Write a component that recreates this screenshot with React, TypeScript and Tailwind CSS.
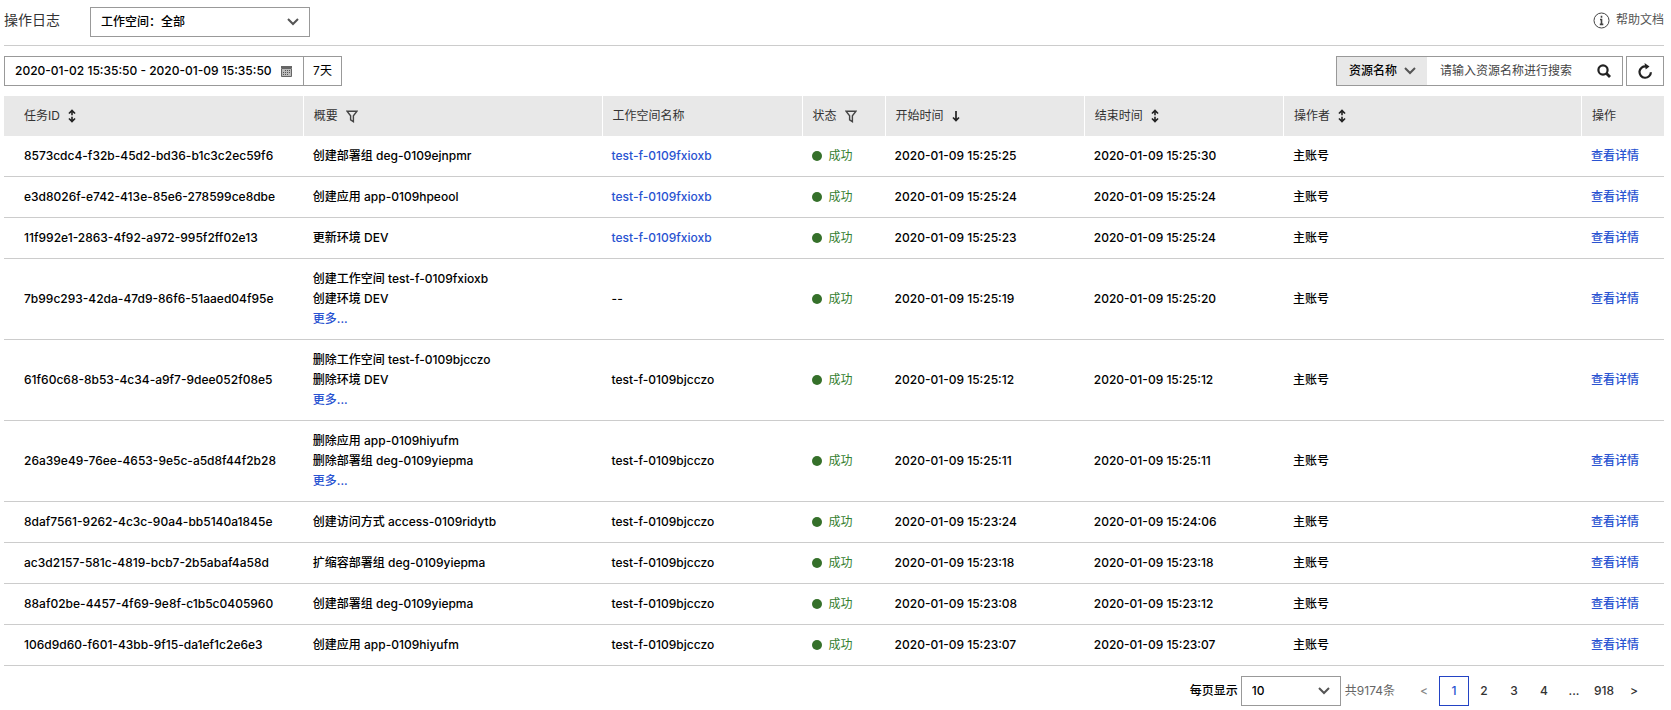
import { ReactNode, SVGProps } from "react";

type Workspace = { name: string; linked?: boolean };

type LogRow = {
  id: string;
  summary: string[];
  more?: boolean;
  workspace: Workspace;
  start: string;
  end: string;
};

const created: Workspace = { name: "test-f-0109fxioxb", linked: true };
const removed: Workspace = { name: "test-f-0109bjcczo" };

const rows: LogRow[] = [
  {
    id: "8573cdc4-f32b-45d2-bd36-b1c3c2ec59f6",
    summary: ["创建部署组 deg-0109ejnpmr"],
    workspace: created,
    start: "2020-01-09 15:25:25",
    end: "2020-01-09 15:25:30",
  },
  {
    id: "e3d8026f-e742-413e-85e6-278599ce8dbe",
    summary: ["创建应用 app-0109hpeool"],
    workspace: created,
    start: "2020-01-09 15:25:24",
    end: "2020-01-09 15:25:24",
  },
  {
    id: "11f992e1-2863-4f92-a972-995f2ff02e13",
    summary: ["更新环境 DEV"],
    workspace: created,
    start: "2020-01-09 15:25:23",
    end: "2020-01-09 15:25:24",
  },
  {
    id: "7b99c293-42da-47d9-86f6-51aaed04f95e",
    summary: ["创建工作空间 test-f-0109fxioxb", "创建环境 DEV"],
    more: true,
    workspace: { name: "--" },
    start: "2020-01-09 15:25:19",
    end: "2020-01-09 15:25:20",
  },
  {
    id: "61f60c68-8b53-4c34-a9f7-9dee052f08e5",
    summary: ["删除工作空间 test-f-0109bjcczo", "删除环境 DEV"],
    more: true,
    workspace: removed,
    start: "2020-01-09 15:25:12",
    end: "2020-01-09 15:25:12",
  },
  {
    id: "26a39e49-76ee-4653-9e5c-a5d8f44f2b28",
    summary: ["删除应用 app-0109hiyufm", "删除部署组 deg-0109yiepma"],
    more: true,
    workspace: removed,
    start: "2020-01-09 15:25:11",
    end: "2020-01-09 15:25:11",
  },
  {
    id: "8daf7561-9262-4c3c-90a4-bb5140a1845e",
    summary: ["创建访问方式 access-0109ridytb"],
    workspace: removed,
    start: "2020-01-09 15:23:24",
    end: "2020-01-09 15:24:06",
  },
  {
    id: "ac3d2157-581c-4819-bcb7-2b5abaf4a58d",
    summary: ["扩缩容部署组 deg-0109yiepma"],
    workspace: removed,
    start: "2020-01-09 15:23:18",
    end: "2020-01-09 15:23:18",
  },
  {
    id: "88af02be-4457-4f69-9e8f-c1b5c0405960",
    summary: ["创建部署组 deg-0109yiepma"],
    workspace: removed,
    start: "2020-01-09 15:23:08",
    end: "2020-01-09 15:23:12",
  },
  {
    id: "106d9d60-f601-43bb-9f15-da1ef1c2e6e3",
    summary: ["创建应用 app-0109hiyufm"],
    workspace: removed,
    start: "2020-01-09 15:23:07",
    end: "2020-01-09 15:23:07",
  },
];

// the operator column takes the space that is left
const columns = [
  { label: "任务ID", width: "w-[18%]", icon: "sort" },
  { label: "概要", width: "w-[18%]", icon: "filter" },
  { label: "工作空间名称", width: "w-[200px]" },
  { label: "状态", width: "w-[83px]", icon: "filter" },
  { label: "开始时间", width: "w-[12%]", icon: "desc" },
  { label: "结束时间", width: "w-[12%]", icon: "sort" },
  { label: "操作者", width: "w-auto", icon: "sort" },
  { label: "操作", width: "w-[83px]" },
];

const pages = ["1", "2", "3", "4", "...", "918"];

function Chevron(props: SVGProps<SVGSVGElement>) {
  return (
    <svg width="12" height="8" viewBox="0 0 12 8" fill="none" stroke="#555" strokeWidth="2" aria-hidden="true" {...props}>
      <path d="M1 1l5 5 5-5" />
    </svg>
  );
}

function SortIcon() {
  return (
    <svg width="8" height="14" viewBox="0 0 8 14" aria-hidden="true">
      <path d="M4 2v4.2M4 7.8V12" stroke="#222" strokeWidth="1.6" />
      <path d="M4 .3l3.6 3.6-.9 1L4 3 1.3 4.9l-.9-1zM4 13.7l3.6-3.6-.9-1L4 11 1.3 9.1l-.9 1z" fill="#222" />
    </svg>
  );
}

function DescIcon() {
  return (
    <svg width="8" height="12" viewBox="0 0 8 12" fill="none" stroke="#222" strokeWidth="1.7" aria-hidden="true">
      <path d="M4 1v9.5M1 7.5l3 3 3-3" />
    </svg>
  );
}

function FilterIcon() {
  return (
    <svg width="12" height="13" viewBox="0 0 12 13" fill="none" stroke="#444" strokeWidth="1.4" aria-hidden="true">
      <path d="M1 1.2h10L7.4 5.8v5.8L4.6 9.8v-4z" />
    </svg>
  );
}

function CalendarIcon() {
  return (
    <svg width="11" height="11" viewBox="0 0 11 11" aria-hidden="true">
      <path d="M0 0h11v2H0z" fill="#666" />
      <path d="M.5 2.5h10v8H.5z" fill="#bbb" stroke="#666" />
      <path d="M4 4h1v1H4zM6 4h1v1H6zM8 4h1v1H8zM2 6h1v1H2zM4 6h1v1H4zM6 6h1v1H6zM8 6h1v1H8zM2 8h1v1H2zM4 8h1v1H4zM6 8h1v1H6z" fill="#555" />
    </svg>
  );
}

function InfoIcon() {
  return (
    <svg width="17" height="17" viewBox="0 0 17 17" fill="none" stroke="#444" aria-hidden="true">
      <circle cx="8.5" cy="8.5" r="7.5" />
      <path d="M8.5 3.8v2M7 7.5h1.5v4.7M6.8 12.4h3.5" strokeWidth="1.6" />
    </svg>
  );
}

function SearchIcon() {
  return (
    <svg width="14" height="14" viewBox="0 0 14 14" fill="none" stroke="#222" strokeWidth="2.2" aria-hidden="true">
      <circle cx="6" cy="6" r="4.6" />
      <path d="M9 9l4 4" strokeWidth="2.8" />
    </svg>
  );
}

function RefreshIcon() {
  return (
    <svg width="16" height="16" viewBox="0 0 16 16" aria-hidden="true">
      <path d="M9 3.4a5.7 5.7 0 1 0 4.9 5.8" fill="none" stroke="#222" strokeWidth="2.2" />
      <path d="M7.5 0l5 3.4-3.8 3z" fill="#222" />
    </svg>
  );
}

const headIcons: Record<string, { label: string; node: ReactNode }> = {
  sort: { label: "排序", node: <SortIcon /> },
  desc: { label: "降序", node: <DescIcon /> },
  filter: { label: "筛选", node: <FilterIcon /> },
};

export default function App() {
  return (
    <div className="bg-white pt-1 pr-[7px] pb-1 pl-1 font-['Inter','Noto_Sans_CJK_SC',sans-serif] text-xs leading-5 font-medium text-black">
      <header className="flex h-[42px] items-center border-b border-[#ccc] pb-[5px]">
        <h1 className="w-[86px] pb-1 text-sm leading-5 font-normal text-[#333]">操作日志</h1>
        <div className="grid w-[220px] items-center">
          <select
            aria-label="工作空间"
            className="col-start-1 row-start-1 h-[30px] appearance-none border border-[#999] bg-white px-[10px]"
          >
            <option>工作空间：全部</option>
          </select>
          <Chevron className="pointer-events-none col-start-1 row-start-1 mr-[11px] justify-self-end" />
        </div>
        <a href="#" className="ml-auto flex items-center gap-[6px] pb-1 font-normal text-[#555]">
          <InfoIcon />
          帮助文档
        </a>
      </header>

      {/* Toolbar */}
      <div className="flex items-center justify-between py-[10px]">
        <div className="flex h-[30px] border border-[#999]">
          <label className="flex w-[299px] items-center border-r border-[#999] pr-[11px] pl-[10px]">
            <input
              type="text"
              aria-label="时间范围"
              defaultValue="2020-01-02 15:35:50 - 2020-01-09 15:35:50"
              className="min-w-0 flex-1 outline-none"
            />
            <CalendarIcon />
          </label>
          <button type="button" className="w-[37px] font-normal text-black">
            7天
          </button>
        </div>
        <div className="flex gap-[3px]">
          <div className="flex h-[30px] w-[287px] items-center border border-[#999]">
            <div className="grid h-full w-[90px] items-center bg-[#e8e8e8]">
              <select aria-label="搜索字段" className="col-start-1 row-start-1 h-full appearance-none pl-3">
                <option>资源名称</option>
              </select>
              <Chevron className="pointer-events-none col-start-1 row-start-1 mr-[11px] justify-self-end" />
            </div>
            <input
              type="text"
              aria-label="搜索"
              placeholder="请输入资源名称进行搜索"
              className="min-w-0 flex-1 px-[13px] font-normal outline-none placeholder:text-[#444]"
            />
            <button type="button" aria-label="搜索" className="mr-[11px]">
              <SearchIcon />
            </button>
          </div>
          <button
            type="button"
            aria-label="刷新"
            className="flex h-[30px] w-[38px] items-center justify-center border border-[#999]"
          >
            <RefreshIcon />
          </button>
        </div>
      </div>

      <table className="w-full table-fixed border-separate border-spacing-0 text-left">
        <thead>
          <tr className="h-10 bg-[#e8e8e8] text-[#333]">
            {columns.map((col) => (
              <th
                key={col.label}
                className={`${col.width} border-l border-white px-[10px] font-normal first:border-l-0 first:pl-5`}
              >
                <div className="flex items-center gap-2">
                  {col.label}
                  {col.icon && (
                    <button type="button" aria-label={headIcons[col.icon].label}>
                      {headIcons[col.icon].node}
                    </button>
                  )}
                </div>
              </th>
            ))}
          </tr>
        </thead>
        <tbody>
          {rows.map((row) => (
            <tr key={row.id} className="*:border-b *:border-[#ccc] *:px-[10px] *:py-[10px] *:first:pl-5">
              <td>{row.id}</td>
              <td>
                {row.summary.map((line) => (
                  <div key={line}>{line}</div>
                ))}
                {row.more && (
                  <a href="#" className="block text-[#2953d1]">
                    更多...
                  </a>
                )}
              </td>
              <td>
                {row.workspace.linked ? (
                  <a href="#" className="text-[#2953d1]">
                    {row.workspace.name}
                  </a>
                ) : (
                  row.workspace.name
                )}
              </td>
              <td>
                <span className="flex items-center gap-[7px] font-normal text-[#35802f]">
                  <span className="size-[10px] rounded-full bg-[#35702a]" />
                  成功
                </span>
              </td>
              <td>{row.start}</td>
              <td>{row.end}</td>
              <td>主账号</td>
              <td>
                <a href="#" className="text-[#2953d1]">
                  查看详情
                </a>
              </td>
            </tr>
          ))}
        </tbody>
      </table>

      <footer className="flex items-center justify-end pt-[10px] pr-[15px]">
        <label htmlFor="page-size" className="mr-[3px]">
          每页显示
        </label>
        <div className="mr-1 grid w-[100px] items-center">
          <select
            id="page-size"
            className="col-start-1 row-start-1 h-[30px] appearance-none border border-[#999] bg-white px-[10px]"
          >
            <option>10</option>
          </select>
          <Chevron className="pointer-events-none col-start-1 row-start-1 mr-[11px] justify-self-end" />
        </div>
        <span className="mr-[14px] font-normal text-[#666]">共9174条</span>
        <nav aria-label="分页" className="flex *:h-[30px] *:w-[30px]">
          <button type="button" className="text-[#888]">
            &lt;
          </button>
          {pages.map((page) => (
            <button
              key={page}
              type="button"
              className={page === "1" ? "border border-[#2343c4] text-[#2953d1]" : "text-[#333]"}
            >
              {page}
            </button>
          ))}
          <button type="button" className="text-[#333]">
            &gt;
          </button>
        </nav>
      </footer>
    </div>
  );
}
